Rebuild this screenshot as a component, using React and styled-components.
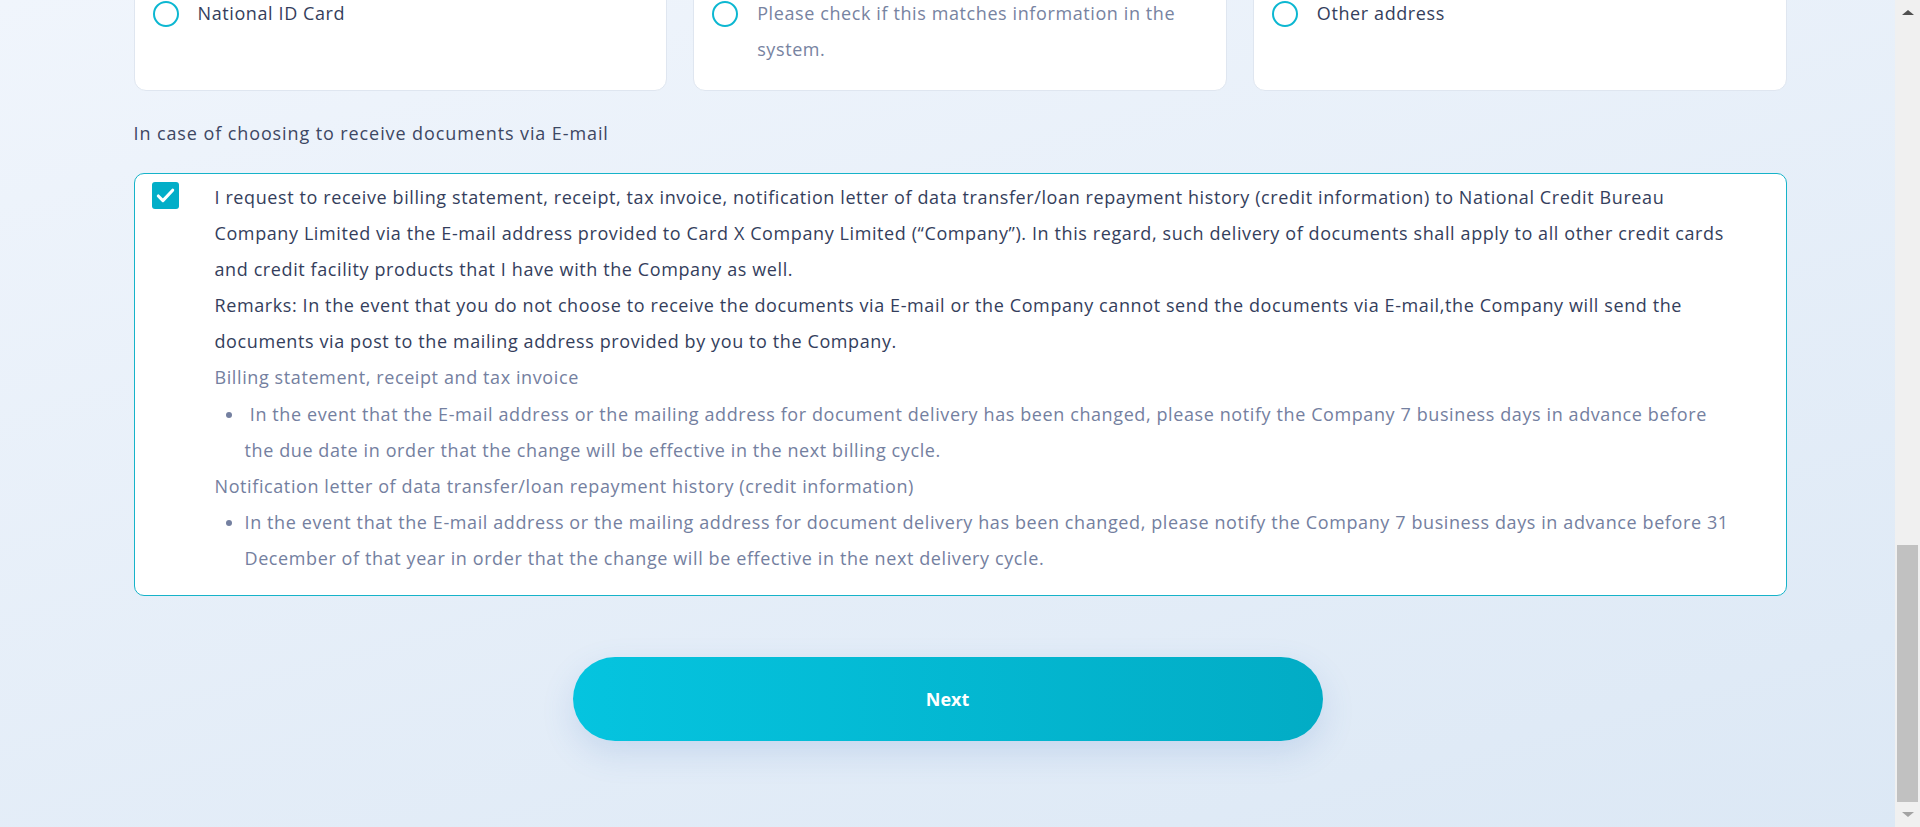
import { useLayoutEffect, useState } from 'react'
import styled, { createGlobalStyle } from 'styled-components'

const RAIL = 25

const GlobalStyle = createGlobalStyle`
  html, body {
    margin: 0;
    padding: 0;
  }
  body {
    padding-right: ${RAIL}px;
    font-family: 'Open Sans', 'Noto Sans', sans-serif;
    color: #343e5c;
    background: linear-gradient(165deg, #f0f5fc 0%, #dce8f5 100%) fixed;
  }
  * {
    box-sizing: border-box;
  }
`

const formSections = [
  {
    title: 'Personal information',
    fields: ['Title', 'First name', 'Last name', 'Date of birth', 'National ID number', 'Nationality', 'Marital status', 'Number of dependants', 'Education level']
  },
  {
    title: 'Contact information',
    fields: ['Mobile phone number', 'E-mail', 'LINE ID']
  },
  {
    title: 'Address as per National ID Card',
    fields: ['House no.', 'Village / Building', 'Moo', 'Soi', 'Road', 'Sub-district', 'District', 'Province', 'Postal code']
  },
  {
    title: 'Work information',
    fields: ['Occupation', 'Business type', 'Position', 'Company name', 'Years of service', 'Monthly income', 'Other income', 'Source of income', 'Office phone number']
  }
]

const deliveryOptions = [
  { id: 'idcard', label: 'National ID Card', muted: false },
  { id: 'current', label: 'Please check if this matches information in the system.', muted: true },
  { id: 'other', label: 'Other address', muted: false }
]

const TopBar = styled.header`
  height: 76px;
  background: #fff;
  display: flex;
  align-items: center;
  padding: 0 calc(50vw - 826px);
  box-shadow: 0 2px 12px rgba(60, 100, 160, 0.08);
`

const Logo = styled.span`
  font-size: 28px;
  font-weight: 800;
  color: #04b6cf;
`

const Container = styled.main`
  width: 1653px;
  margin-left: calc(50vw - 826.5px);
`

const PageTitle = styled.h1`
  margin: 48px 0 40px;
  font-size: 32px;
  font-weight: 700;
  color: #2b3654;
`

const Section = styled.section`
  margin-bottom: ${({ $last }) => ($last ? '0' : '40px')};
`

const SectionTitle = styled.h2`
  margin: 0 0 24px;
  font-size: 22px;
  font-weight: 700;
  color: #2b3654;
`

const FieldGrid = styled.div`
  display: grid;
  grid-template-columns: repeat(3, 1fr);
  gap: 24px 26px;
`

const Field = styled.label`
  display: flex;
  flex-direction: column;
  gap: 8px;
  font-size: 16px;
  color: #5b6683;
`

const Input = styled.div`
  height: 56px;
  border-radius: 10px;
  border: 1px solid #dfe6f0;
  background: #fff;
`

const OptionGrid = styled.div`
  display: grid;
  grid-template-columns: repeat(3, 1fr);
  gap: 26px;
`

const OptionCard = styled.label`
  display: flex;
  align-items: flex-start;
  gap: 19px;
  padding: 23px 18px;
  background: #fff;
  border: 1px solid #dfe6f0;
  border-radius: 12px;
  cursor: pointer;
`

const Radio = styled.span`
  flex: none;
  width: 26px;
  height: 26px;
  margin-top: 6px;
  border-radius: 50%;
  border: 2px solid #0cb7d1;
`

const OptionText = styled.span`
  font-size: 18px;
  line-height: 36px;
  letter-spacing: 0.6px;
  color: ${({ $muted }) => ($muted ? '#7783a1' : '#343e5c')};
`

const Hint = styled.p`
  margin: 30px 0 28px;
  font-size: 18px;
  line-height: 24px;
  letter-spacing: 0.9px;
  color: #3d4763;
`

const ConsentBox = styled.div`
  display: flex;
  align-items: flex-start;
  gap: 36px;
  padding: 5px 50px 19px 17px;
  background: #fff;
  border: 1px solid #16b3c9;
  border-radius: 10px;
`

const Checkbox = styled.span`
  flex: none;
  width: 27px;
  height: 27px;
  margin-top: 3px;
  border-radius: 3px;
  background: #02aec8;
  display: flex;
  align-items: center;
  justify-content: center;
`

const ConsentText = styled.div`
  flex: 1;
  font-size: 18px;
  line-height: 36.1px;
  letter-spacing: 0.6px;
  p {
    margin: 0;
  }
`

const Muted = styled.div`
  color: #7480a0;
`

const BulletList = styled.ul`
  margin: 0;
  padding-left: 30px;
  color: #7480a0;
`

const Footer = styled.div`
  display: flex;
  justify-content: center;
  padding: 61px 0 86px;
`

const NextButton = styled.button`
  width: 750px;
  height: 84px;
  border: none;
  border-radius: 42px;
  background: linear-gradient(90deg, #05c4df 0%, #02acc5 100%);
  box-shadow: 0 12px 32px rgba(80, 130, 200, 0.18);
  color: #fff;
  font-family: inherit;
  font-size: 18px;
  font-weight: 700;
  cursor: pointer;
`

const Rail = styled.div`
  position: fixed;
  top: 0;
  right: 0;
  bottom: 0;
  width: ${RAIL}px;
  background: #f0f0f0;
  display: flex;
  flex-direction: column;
`

const RailButton = styled.div`
  height: ${RAIL}px;
  flex: none;
  display: flex;
  align-items: center;
  justify-content: center;
  &::before {
    content: '';
    border-left: 6px solid transparent;
    border-right: 6px solid transparent;
    ${({ $down }) =>
      $down ? 'border-top: 5px solid #a3a3a3;' : 'border-bottom: 5px solid #505050;'}
  }
`

const RailTrack = styled.div`
  flex: 1;
  position: relative;
`

const RailThumb = styled.div`
  position: absolute;
  left: 2px;
  right: 2px;
  background: #c1c1c1;
`

const CheckIcon = () => (
  <svg width="23" height="23" viewBox="0 0 24 24" fill="none">
    <path d="M4.5 12.5l4.8 4.8L19.5 6.5" stroke="#fff" strokeWidth="3.2" strokeLinecap="round" strokeLinejoin="round" />
  </svg>
)

const ScrollRail = ({ thumb }) => (
  <Rail>
    <RailButton />
    <RailTrack>
      <RailThumb style={{ top: `${thumb.top}%`, height: `${thumb.size}%` }} />
    </RailTrack>
    <RailButton $down />
  </Rail>
)

const App = () => {
  const [thumb, setThumb] = useState({ top: 0, size: 100 })

  useLayoutEffect(() => {
    const update = () => {
      const doc = document.documentElement
      window.scrollTo(0, doc.scrollHeight)
      const total = doc.scrollHeight || 1
      setThumb({ top: (window.scrollY / total) * 100, size: (window.innerHeight / total) * 100 })
    }
    update()
    const id = requestAnimationFrame(update)
    if (document.fonts) document.fonts.ready.then(update)
    return () => cancelAnimationFrame(id)
  }, [])

  return (
    <>
      <GlobalStyle />
      <TopBar>
        <Logo>CardX</Logo>
      </TopBar>
      <Container>
        <PageTitle>Credit card application</PageTitle>
        {formSections.map((section) => (
          <Section key={section.title}>
            <SectionTitle>{section.title}</SectionTitle>
            <FieldGrid>
              {section.fields.map((field) => (
                <Field key={field}>
                  {field}
                  <Input />
                </Field>
              ))}
            </FieldGrid>
          </Section>
        ))}
        <Section $last>
          <SectionTitle>Mailing address for document delivery</SectionTitle>
          <OptionGrid>
            {deliveryOptions.map((option) => (
              <OptionCard key={option.id}>
                <Radio />
                <OptionText $muted={option.muted}>{option.label}</OptionText>
              </OptionCard>
            ))}
          </OptionGrid>
        </Section>
        <Hint>In case of choosing to receive documents via E-mail</Hint>
        <ConsentBox>
          <Checkbox>
            <CheckIcon />
          </Checkbox>
          <ConsentText>
            <p>
              I request to receive billing statement, receipt, tax invoice, notification letter of data transfer/loan
              repayment history (credit information) to National Credit Bureau Company Limited via the E-mail address
              provided to Card X Company Limited (“Company”). In this regard, such delivery of documents shall apply to
              all other credit cards and credit facility products that I have with the Company as well.
            </p>
            <p>
              Remarks: In the event that you do not choose to receive the documents via E-mail or the Company cannot
              send the documents via E-mail,the Company will send the documents via post to the mailing address
              provided by you to the Company.
            </p>
            <Muted>Billing statement, receipt and tax invoice</Muted>
            <BulletList>
              <li>
                {'\u00a0'}In the event that the E-mail address or the mailing address for document delivery has been
                changed, please notify the Company 7 business days in advance before the due date in order that the
                change will be effective in the next billing cycle.
              </li>
            </BulletList>
            <Muted>Notification letter of data transfer/loan repayment history (credit information)</Muted>
            <BulletList>
              <li>
                In the event that the E-mail address or the mailing address for document delivery has been changed,
                please notify the Company 7 business days in advance before 31 December of that year in order that the
                change will be effective in the next delivery cycle.
              </li>
            </BulletList>
          </ConsentText>
        </ConsentBox>
      </Container>
      <Footer>
        <NextButton type="button">Next</NextButton>
      </Footer>
      <ScrollRail thumb={thumb} />
    </>
  )
}

export default App
